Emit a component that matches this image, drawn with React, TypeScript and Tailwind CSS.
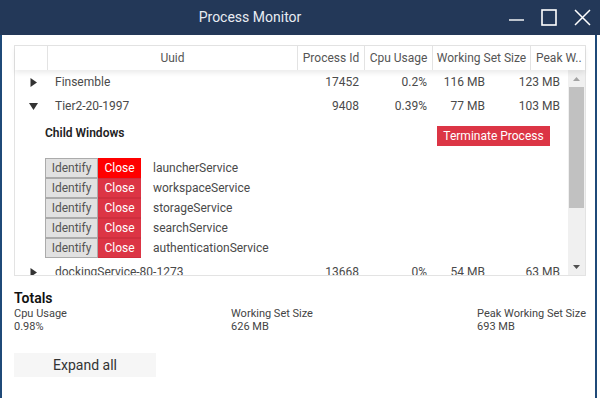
import React from 'react';

const children = ['launcherService', 'workspaceService', 'storageService', 'searchService', 'authenticationService'];

function Caret({ open }: { open?: boolean }) {
  return (
    <svg width="9" height="9" viewBox="0 0 9 9" className="fill-[#333]">
      {open ? <path d="M0 1 L9 1 L4.5 8 Z" /> : <path d="M1.5 0 L8 4.5 L1.5 9 Z" />}
    </svg>
  );
}

function Row({ open, name, pid, cpu, ws, peak }: { open?: boolean; name: string; pid: string; cpu: string; ws: string; peak: string }) {
  return (
    <div className="flex h-[24px] items-center text-[12px] text-[#4a4a4a] shrink-0 whitespace-nowrap">
      <div className="w-[33px] flex justify-center pl-[3px]">
        <Caret open={open} />
      </div>
      <div className="w-[250px] pl-[7px]">{name}</div>
      <div className="w-[67px] text-right pr-[6px]">{pid}</div>
      <div className="w-[68px] text-right pr-[6px]">{cpu}</div>
      <div className="w-[58px] text-right pr-[6px]">{ws}</div>
      <div className="w-[75px] text-right pr-[6px]">{peak}</div>
    </div>
  );
}

export default function App() {
  return (
    <div className="w-[600px] h-[398px] bg-white flex flex-col font-['Roboto',sans-serif] overflow-hidden">
      {/* Title bar */}
      <div className="h-[35px] bg-[#233858] flex items-center shrink-0">
        <div className="flex-1 text-center text-[14px] text-[#e8ecf2]">Process Monitor</div>
        <div className="flex h-full pr-[1px]">
          <div className="w-[33px] flex items-center justify-center">
            <svg width="17" height="17" viewBox="0 0 17 17" className="stroke-white" strokeWidth="1.4">
              <path d="M1 11 H16" />
            </svg>
          </div>
          <div className="w-[33px] flex items-center justify-center">
            <svg width="17" height="17" viewBox="0 0 17 17" fill="none" className="stroke-white" strokeWidth="1.6">
              <rect x="1" y="1" width="14" height="15" />
            </svg>
          </div>
          <div className="w-[33px] flex items-center justify-center">
            <svg width="17" height="17" viewBox="0 0 17 17" className="stroke-white" strokeWidth="1.5">
              <path d="M1 1 L16 16 M16 1 L1 16" />
            </svg>
          </div>
        </div>
      </div>

      {/* Body */}
      <div className="flex-1 w-[597px] border-x-2 border-[#1f4a78] pt-[10px] pl-[12px] flex flex-col">
        {/* Table */}
        <div className="w-[572px] h-[231px] border border-[#e3e3e3] flex flex-col">
          <div className="h-[24px] flex text-[12px] text-[#555] shrink-0 shadow-[0_3px_5px_rgba(0,0,0,0.08)] relative z-10">
            <div className="w-[32px]" />
            <div className="w-[250px] border-l border-[#e3e3e3] flex items-center justify-center">Uuid</div>
            <div className="w-[67px] border-l border-[#e3e3e3] flex items-center justify-center">Process Id</div>
            <div className="w-[68px] border-l border-[#e3e3e3] flex items-center justify-center">Cpu Usage</div>
            <div className="w-[98px] border-l border-[#e3e3e3] flex items-center justify-center">Working Set Size</div>
            <div className="flex-1 border-l border-[#e3e3e3] flex items-center pl-[5px] whitespace-nowrap overflow-hidden">Peak W..</div>
          </div>
          <div className="flex-1 flex overflow-hidden">
            <div className="flex-1 flex flex-col overflow-hidden">
              <Row name="Finsemble" pid="17452" cpu="0.2%" ws="116 MB" peak="123 MB" />
              <Row open name="Tier2-20-1997" pid="9408" cpu="0.39%" ws="77 MB" peak="103 MB" />
              <div className="pl-[30px] pr-[18px] pt-[8px] shrink-0">
                <div className="flex items-start justify-between h-[20px]">
                  <div className="text-[12px] font-semibold text-[#222] leading-[14px]">Child Windows</div>
                  <button className="h-[20px] w-[113px] bg-[#dc3545] text-white text-[12px]">Terminate Process</button>
                </div>
                <div className="mt-[12px] flex flex-col">
                  {children.map((c, i) => (
                    <div key={c} className="flex items-center h-[20px]">
                      <button className="w-[53px] h-[20px] bg-[#e1e1e1] border border-[#ababab] text-[12px] text-[#555]">Identify</button>
                      <button className={`w-[43px] h-[20px] text-[12px] text-white border-y ${i === 0 ? 'bg-[#ff0000] border-[#ff0000]' : 'bg-[#dc3545] border-[#cf2f3e]'}`}>Close</button>
                      <span className="ml-[12px] text-[12px] text-[#4a4a4a]">{c}</span>
                    </div>
                  ))}
                </div>
              </div>
              <div className="mt-[2px]">
                <Row name="dockingService-80-1273" pid="13668" cpu="0%" ws="54 MB" peak="63 MB" />
              </div>
            </div>
            {/* Scrollbar */}
            <div className="w-[17px] bg-[#f0f0f0] flex flex-col items-center shrink-0">
              <div className="h-[17px] flex items-center justify-center">
                <svg width="7" height="4" viewBox="0 0 7 4" className="fill-[#a3a3a3]">
                  <path d="M0 4 L3.5 0 L7 4 Z" />
                </svg>
              </div>
              <div className="w-[15px] h-[121px] bg-[#c1c1c1]" />
              <div className="flex-1" />
              <div className="h-[17px] flex items-center justify-center">
                <svg width="7" height="4" viewBox="0 0 7 4" className="fill-[#505050]">
                  <path d="M0 0 L7 0 L3.5 4 Z" />
                </svg>
              </div>
            </div>
          </div>
        </div>

        {/* Totals */}
        <div className="w-[572px] mt-[14px]">
          <div className="text-[14px] font-semibold text-[#111] leading-[17px]">Totals</div>
          <div className="flex justify-between text-[11px] text-[#444] leading-[13px]">
            <div>
              <div>Cpu Usage</div>
              <div>0.98%</div>
            </div>
            <div>
              <div>Working Set Size</div>
              <div>626 MB</div>
            </div>
            <div>
              <div>Peak Working Set Size</div>
              <div>693 MB</div>
            </div>
          </div>
        </div>

        <button className="mt-[20px] w-[142px] h-[24px] bg-[#f6f6f6] text-[14px] text-[#333]">Expand all</button>
      </div>
    </div>
  );
}
